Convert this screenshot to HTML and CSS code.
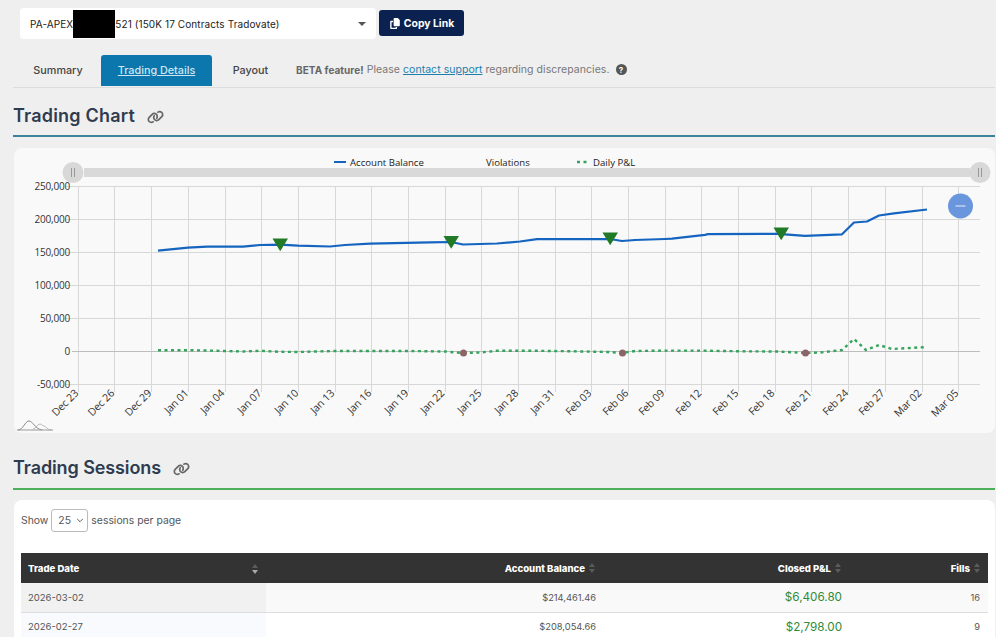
FILE: index.html
```html
<!DOCTYPE html>
<html lang="en">
<head>
<meta charset="utf-8">
<title>Trading Details</title>
<link rel="stylesheet" href="styles.css">
</head>
<body>
<div class="account-row">
  <div class="account-select">
    <span class="account-name">PA-APEX<span class="redaction"></span>521 (150K 17 Contracts Tradovate)</span>
    <span class="caret"></span>
  </div>
  <button class="copy-btn">
    <svg class="copy-icon" viewBox="0 0 448 512"><path d="M208 0H332.1c12.7 0 24.9 5.1 33.9 14.1l67.9 67.9c9 9 14.1 21.2 14.1 33.9V336c0 26.5-21.5 48-48 48H208c-26.5 0-48-21.5-48-48V48c0-26.5 21.5-48 48-48zM48 128h80v64H64V448H256V416h64v48c0 26.5-21.5 48-48 48H48c-26.5 0-48-21.5-48-48V176c0-26.5 21.5-48 48-48z"/></svg>
    Copy Link
  </button>
</div>

<nav class="tabs">
  <a class="tab tab-summary">Summary</a>
  <a class="tab tab-active">Trading Details</a>
  <a class="tab tab-payout">Payout</a>
  <p class="beta"><b>BETA feature!</b> Please <a class="support">contact support</a> regarding discrepancies.<span class="help">?</span></p>
</nav>

<h2 class="section-title title-chart">Trading Chart
  <svg class="link-icon" viewBox="0 0 640 512"><path d="M579.8 267.7c56.5-56.5 56.5-148 0-204.5c-50-50-128.8-56.5-186.3-15.4l-1.6 1.1c-14.4 10.3-17.7 30.3-7.4 44.6s30.3 17.7 44.6 7.4l1.6-1.1c32.1-22.9 76-19.3 103.8 8.6c31.5 31.5 31.5 82.5 0 114L422.3 334.8c-31.5 31.5-82.5 31.5-114 0c-27.9-27.9-31.5-71.8-8.6-103.8l1.1-1.6c10.3-14.4 6.9-34.4-7.4-44.6s-34.4-6.9-44.6 7.4l-1.1 1.6C206.5 251.2 213 330 263 380c56.5 56.5 148 56.5 204.5 0L579.8 267.7zM60.2 244.3c-56.5 56.5-56.5 148 0 204.5c50 50 128.8 56.5 186.3 15.4l1.6-1.1c14.4-10.3 17.7-30.3 7.4-44.6s-30.3-17.7-44.6-7.4l-1.6 1.1c-32.1 22.9-76 19.3-103.8-8.6C74 372 74 321 105.5 289.5L217.7 177.2c31.5-31.5 82.5-31.5 114 0c27.9 27.9 31.5 71.8 8.6 103.9l-1.1 1.6c-10.3 14.4-6.9 34.4 7.4 44.6s34.4 6.9 44.6-7.4l1.1-1.6C433.5 260.8 427 182 377 132c-56.5-56.5-148-56.5-204.5 0L60.2 244.3z"/></svg>
</h2>

<section class="chart-card">
  <svg class="chart" viewBox="14 148 981 285" width="981" height="285">
    <g class="grid">
      <path d="M66 186.5H980M66 219.5H980M66 252.5H980M66 285.5H980M66 318.5H980M66 384.5H980"/>
      <path d="M78.5 186V392M114.5 186V392M151.5 186V392M188.5 186V392M225.5 186V392M261.5 186V392M298.5 186V392M335.5 186V392M371.5 186V392M408.5 186V392M445.5 186V392M481.5 186V392M518.5 186V392M555.5 186V392M591.5 186V392M628.5 186V392M665.5 186V392M701.5 186V392M738.5 186V392M775.5 186V392M811.5 186V392M848.5 186V392M885.5 186V392M922.5 186V392M958.5 186V392"/>
    </g>
    <path class="zero-line" d="M72 351.5H980"/>

    <g class="y-labels">
      <text x="70" y="190">250,000</text>
      <text x="70" y="223">200,000</text>
      <text x="70" y="256">150,000</text>
      <text x="70" y="289">100,000</text>
      <text x="70" y="322">50,000</text>
      <text x="70" y="355">0</text>
      <text x="70" y="388">-50,000</text>
    </g>

    <g class="x-labels">
      <text transform="translate(79 394) rotate(-45)">Dec 23</text>
      <text transform="translate(115 394) rotate(-45)">Dec 26</text>
      <text transform="translate(152 394) rotate(-45)">Dec 29</text>
      <text transform="translate(189 394) rotate(-45)">Jan 01</text>
      <text transform="translate(225 394) rotate(-45)">Jan 04</text>
      <text transform="translate(262 394) rotate(-45)">Jan 07</text>
      <text transform="translate(299 394) rotate(-45)">Jan 10</text>
      <text transform="translate(335 394) rotate(-45)">Jan 13</text>
      <text transform="translate(372 394) rotate(-45)">Jan 16</text>
      <text transform="translate(409 394) rotate(-45)">Jan 19</text>
      <text transform="translate(445 394) rotate(-45)">Jan 22</text>
      <text transform="translate(482 394) rotate(-45)">Jan 25</text>
      <text transform="translate(519 394) rotate(-45)">Jan 28</text>
      <text transform="translate(555 394) rotate(-45)">Jan 31</text>
      <text transform="translate(592 394) rotate(-45)">Feb 03</text>
      <text transform="translate(629 394) rotate(-45)">Feb 06</text>
      <text transform="translate(665 394) rotate(-45)">Feb 09</text>
      <text transform="translate(702 394) rotate(-45)">Feb 12</text>
      <text transform="translate(739 394) rotate(-45)">Feb 15</text>
      <text transform="translate(775 394) rotate(-45)">Feb 18</text>
      <text transform="translate(812 394) rotate(-45)">Feb 21</text>
      <text transform="translate(849 394) rotate(-45)">Feb 24</text>
      <text transform="translate(885 394) rotate(-45)">Feb 27</text>
      <text transform="translate(922 394) rotate(-45)">Mar 02</text>
      <text transform="translate(959 394) rotate(-45)">Mar 05</text>
    </g>

    <path class="pnl-line" d="M158 350.2L188 350.2L207 350.5L225 351L243 351.5L261 350.8L280 351.8L298 352L335 351L371 351L408 351L445 351.5L463 353L480 352.5L497 350.8L537 350.8L573 351.3L610 352L622 353L635 351L665 350.6L700 350.6L740 351.3L778 351.5L805 353L820 352.5L842 350L854 339L866 350L879 345L892 349L927 347"/>
    <path class="balance-line" d="M158 250.7L188 247.7L207 246.7L243 246.7L260 245L280 244.7L298 245.7L330 246.5L345 245L370 243.7L430 242.3L451 242L463 244.5L497 243.5L520 241.5L537 239.2L610 239L622 241L635 240L665 239L672 238.7L705 234.8L708 234.2L778 233.8L805 235.8L842 234.3L854 222.5L867 221.5L879 215.5L894 213.3L927 209.5"/>

    <g class="violation">
      <path d="M272.500 238.500H288L280.200 251.300Z"/>
      <path d="M443.500 236H459L451.200 248.800Z"/>
      <path d="M602.500 232.500H618L610.200 245.300Z"/>
      <path d="M773.500 227.500H789L781.200 240.300Z"/>
    </g>
    <g class="loss-dot">
      <circle cx="463.500" cy="353" r="3.500"/>
      <circle cx="622.500" cy="353" r="3.500"/>
      <circle cx="805.500" cy="353" r="3.500"/>
    </g>

    <rect class="slider-track" x="84" y="168" width="886" height="9"/>
    <g class="slider-handle">
      <circle cx="73" cy="172.500" r="10.500"/>
      <path d="M71.500 168V177M74.500 168V177"/>
      <circle cx="980" cy="172.500" r="10.500"/>
      <path d="M978.500 168V177M981.500 168V177"/>
    </g>

    <g class="legend">
      <path class="balance-line" d="M334 162H346"/>
      <text x="350" y="166">Account Balance</text>
      <text x="486" y="166">Violations</text>
      <path class="pnl-line" d="M577 162H589"/>
      <text x="593" y="166">Daily P&amp;L</text>
    </g>

    <circle class="zoom-btn" cx="960.500" cy="206" r="12.500"/>
    <path class="zoom-minus" d="M955.500 206H965.500"/>

    <g class="mini-chart">
      <path class="mini-back" d="M33 429C36 429 37 424 40 424C42 424 42 426 44 426C46 426 47 430 51 430"/>
      <path class="mini-front" d="M18 430C23 430 25 421 29 421C33 421 35 429 42 430"/>
      <path class="mini-base" d="M17 430H53"/>
    </g>
  </svg>
</section>

<h2 class="section-title title-sessions">Trading Sessions
  <svg class="link-icon" viewBox="0 0 640 512"><path d="M579.8 267.7c56.5-56.5 56.5-148 0-204.5c-50-50-128.8-56.5-186.3-15.4l-1.6 1.1c-14.4 10.3-17.7 30.3-7.4 44.6s30.3 17.7 44.6 7.4l1.6-1.1c32.1-22.9 76-19.3 103.8 8.6c31.5 31.5 31.5 82.5 0 114L422.3 334.8c-31.5 31.5-82.5 31.5-114 0c-27.9-27.9-31.5-71.8-8.6-103.8l1.1-1.6c10.3-14.4 6.9-34.4-7.4-44.6s-34.4-6.9-44.6 7.4l-1.1 1.6C206.5 251.2 213 330 263 380c56.5 56.5 148 56.5 204.5 0L579.8 267.7zM60.2 244.3c-56.5 56.5-56.5 148 0 204.5c50 50 128.8 56.5 186.3 15.4l1.6-1.1c14.4-10.3 17.7-30.3 7.4-44.6s-30.3-17.7-44.6-7.4l-1.6 1.1c-32.1 22.9-76 19.3-103.8-8.6C74 372 74 321 105.5 289.5L217.7 177.2c31.5-31.5 82.5-31.5 114 0c27.9 27.9 31.5 71.8 8.6 103.9l-1.1 1.6c-10.3 14.4-6.9 34.4 7.4 44.6s34.4 6.9 44.6-7.4l1.1-1.6C433.5 260.8 427 182 377 132c-56.5-56.5-148-56.5-204.5 0L60.2 244.3z"/></svg>
</h2>

<section class="sessions-card">
  <div class="page-size">
    <span>Show</span>
    <span class="size-select">25<svg class="chevron" viewBox="0 0 10 6"><path d="M1.500 1L5 4.500L8.500 1"/></svg></span>
    <span>sessions per page</span>
  </div>
  <table class="sessions">
    <thead>
      <tr>
        <th class="col-date">Trade Date<span class="sort sort-desc"></span></th>
        <th class="col-balance">Account Balance<span class="sort"></span></th>
        <th class="col-pnl">Closed P&amp;L<span class="sort"></span></th>
        <th class="col-fills">Fills<span class="sort"></span></th>
      </tr>
    </thead>
    <tbody>
      <tr class="row-odd">
        <td class="cell-date">2026-03-02</td>
        <td class="cell-num">$214,461.46</td>
        <td class="cell-num cell-pnl">$6,406.80</td>
        <td class="cell-num">16</td>
      </tr>
      <tr class="row-even">
        <td class="cell-date">2026-02-27</td>
        <td class="cell-num">$208,054.66</td>
        <td class="cell-num cell-pnl">$2,798.00</td>
        <td class="cell-num">9</td>
      </tr>
    </tbody>
  </table>
</section>
</body>
</html>
```

FILE: styles.css
```css
* { box-sizing: border-box; }

html, body { height: 637px; overflow: hidden; }

body {
  margin: 0;
  background: #efefef;
  color: #444;
  font-family: Inter, "Open Sans", sans-serif;
  font-size: 10px;
  padding: 8px 1px 0 14px;
}

/* account row */
.account-row { display: flex; align-items: flex-start; gap: 3px; padding-left: 6px; }

.account-select {
  width: 356px;
  height: 31px;
  background: #fff;
  border-radius: 4px;
  display: flex;
  align-items: center;
  justify-content: space-between;
  padding: 0 10px 0 10px;
  color: #222;
  font-size: 10px;
}
.account-name { display: flex; align-items: center; letter-spacing: 0.1px; }
.redaction { display: inline-block; width: 42px; height: 28px; background: #000; }
.caret {
  width: 0; height: 0;
  border-left: 4px solid transparent;
  border-right: 4px solid transparent;
  border-top: 4px solid #555;
}

.copy-btn {
  margin-top: 2px;
  width: 85px;
  height: 26px;
  border: 0;
  border-radius: 3px;
  background: #0b2150;
  color: #fff;
  font: 700 10.400px Inter, sans-serif;
  display: flex;
  align-items: center;
  justify-content: center;
  gap: 4px;
  padding: 0 0 0 1px;
}
.copy-icon { width: 10px; height: 11px; fill: #fff; }

/* tabs */
.tabs {
  margin-top: 16px;
  height: 33px;
  border-bottom: 1px solid #dcdcdc;
  display: flex;
  align-items: flex-start;
  margin-left: -1px;
}
.tab {
  height: 31px;
  display: flex;
  align-items: center;
  justify-content: center;
  font-size: 10.800px;
  font-weight: 500;
  color: #444;
}
.tab-summary { width: 84px; margin-left: 3px; }
.tab-active {
  width: 111px;
  background: #0c77ad;
  color: #cfe6f2;
  text-decoration: underline;
  border-radius: 3px 3px 0 0;
  margin-left: 1px;
}
.tab-payout { width: 77px; }
.beta { margin: 0 0 0 7px; height: 29px; display: flex; align-items: center; white-space: pre; font-size: 10.500px; letter-spacing: 0.05px; color: #777; }
.beta b { color: #666; font-weight: 700; font-size: 10px; }
.support { color: #1c7fae; text-decoration: underline; }
.help {
  width: 11px; height: 11px;
  margin-left: 6px;
  border-radius: 50%;
  background: #555;
  color: #fff;
  font-size: 8px;
  font-weight: 700;
  display: flex;
  align-items: center;
  justify-content: center;
}

/* section titles */
.section-title {
  margin: 0 0 0 -1px;
  display: flex;
  align-items: center;
  gap: 12px;
  color: #2f3c4f;
  font-size: 18px;
  font-weight: 600;
  line-height: 1;
}
.title-chart {
  margin-top: 14px;
  height: 35px;
  padding-bottom: 5px;
  border-bottom: 2px solid #3a8199;
  letter-spacing: 0.2px;
}
.title-sessions {
  margin-top: 18px;
  height: 39px;
  padding-bottom: 3px;
  border-bottom: 2px solid #4caf5a;
  letter-spacing: -0.1px;
}
.link-icon { width: 17px; height: 14px; fill: #666; margin-top: 2px; }

/* chart */
.chart-card {
  margin-top: 11px;
  height: 285px;
  background: #f9f9f9;
  border-radius: 8px;
  overflow: hidden;
}
.chart { display: block; font-family: "Open Sans", sans-serif; }
.grid path { fill: none; stroke: #d8d8d8; stroke-width: 1; }
.zero-line { fill: none; stroke: #bdbdbd; stroke-width: 1; }
.y-labels text { font-size: 10px; fill: #333; text-anchor: end; letter-spacing: -0.2px; }
.x-labels text { font-size: 10.500px; fill: #333; text-anchor: end; letter-spacing: -0.2px; }
.legend text { font-size: 9.600px; fill: #222; }
.balance-line { fill: none; stroke: #1565c0; stroke-width: 2.200; stroke-linejoin: round; }
.pnl-line { fill: none; stroke: #35a35c; stroke-width: 2.400; stroke-dasharray: 3 3.500; }
.violation path { fill: #217a27; }
.loss-dot circle { fill: #8d6466; }
.slider-track { fill: #d9d9d9; }
.slider-handle circle { fill: #d8d8d8; }
.slider-handle path { fill: none; stroke: #999; stroke-width: 1; }
.zoom-btn { fill: #6a96dd; }
.zoom-minus { fill: none; stroke: #e6eefb; stroke-width: 1; }
.mini-chart path { fill: none; stroke-width: 1; }
.mini-base { stroke: #999; stroke-width: 1.200; }
.mini-back { stroke: #bbb; }
.mini-front { stroke: #888; }

/* sessions */
.sessions-card {
  margin-top: 10px;
  background: #fff;
  border-radius: 8px 8px 0 0;
  padding: 9px 7px 0;
  height: 137px;
}
.page-size { display: flex; align-items: center; gap: 3px; height: 23px; color: #555; font-size: 10.400px; }
.size-select {
  width: 37px; height: 23px;
  border: 1px solid #bbb;
  border-radius: 3px;
  background: #fff;
  display: flex;
  align-items: center;
  justify-content: space-between;
  padding: 0 3px 0 6px;
  font-size: 10.400px;
}
.chevron { width: 8px; height: 5px; fill: none; stroke: #555; stroke-width: 1.200; }

.sessions {
  margin-top: 21px;
  width: 967px;
  table-layout: fixed;
  border-collapse: collapse;
}
.sessions th {
  height: 30px;
  background: #333;
  color: #fff;
  font-size: 9.600px;
  font-weight: 800;
  text-align: right;
  padding: 0 9px 0 7px;
  white-space: nowrap;
}
.sessions th .sort { position: relative; display: inline-block; width: 6px; height: 10px; margin-left: 4px; vertical-align: -1px; }
.sort::before, .sort::after {
  content: "";
  position: absolute;
  left: 0;
  border-left: 3px solid transparent;
  border-right: 3px solid transparent;
}
.sort::before { top: 0; border-bottom: 4px solid #5b5b5b; }
.sort::after { bottom: 0; border-top: 4px solid #5b5b5b; }
.sort-desc::after { border-top-color: #aaa; }
.sessions .col-date { width: 245px; text-align: left; }
.sessions .col-date .sort { float: right; margin: 1px -1px 0 0; }
.col-balance { width: 338px; }
.col-pnl { width: 246px; }
.sessions .col-fills { width: 138px; padding-right: 8px; }
.sessions td {
  height: 29px;
  padding: 0 8px 0 7px;
  border-bottom: 1px solid #ddd;
  font-size: 9.300px;
  color: #555;
}
.row-odd td { background: #f9f9f9; }
.row-odd .cell-date { background: #f1f1f1; }
.row-even .cell-date { background: #f8fafd; }
.sessions .cell-date { text-align: left; font-size: 9.500px; }
.cell-num { text-align: right; }
.sessions .cell-pnl { color: #2e8b38; font-size: 11.700px; }
```
